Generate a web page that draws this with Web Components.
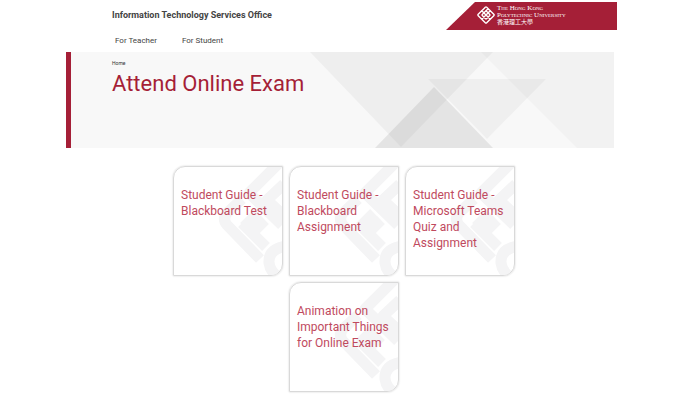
<!DOCTYPE html>
<html lang="en">
<head>
<meta charset="utf-8">
<title>Attend Online Exam</title>
<style>
	body {
		margin: 0;
		background: #fff;
		font-family: Roboto, "Liberation Sans", sans-serif;
	}
</style>
</head>
<body>
<exam-page></exam-page>

<template id="site-logo">
	<style>
		:host {
			display: block;
		}
		a {
			display: flex;
			align-items: flex-start;
			gap: 2px;
			box-sizing: border-box;
			width: 171px;
			height: 28px;
			padding: 3px 0 0 31px;
			background: #a51f37;
			clip-path: polygon(29px 0, 100% 0, 100% 100%, 0 100%);
			color: #fff;
			text-decoration: none;
		}
		svg {
			display: block;
			flex: none;
		}
		.name {
			font: 7px/7px "Liberation Serif", "Noto Sans CJK TC", serif;
			white-space: nowrap;
		}
		.name span {
			display: block;
		}
		.caps {
			font-variant: small-caps;
		}
		.zh {
			font-size: 6px;
		}
	</style>
	<a href="#">
		<svg width="18" height="20" viewBox="0 0 18 20" fill="none" stroke="#fff" stroke-width="1.4" aria-hidden="true">
			<g transform="rotate(45 9 10)">
				<path d="M3 7V5Q3 4 4 4H9V10H3V7M6 4V7H12M9 4H14Q15 4 15 5V10H9M12 7V13M15 10V15Q15 16 14 16H9V10M12 13H6M9 16H4Q3 16 3 15V10M6 13V7"/>
			</g>
		</svg>
		<span class="name">
			<span class="caps">The Hong Kong</span>
			<span class="caps">Polytechnic University</span>
			<span class="zh">香港理工大學</span>
		</span>
	</a>
</template>

<template id="site-header">
	<style>
		:host {
			display: block;
			padding: 2px 68px 0 112px;
			color: #444;
		}
		.top {
			display: flex;
			justify-content: space-between;
		}
		.office {
			padding-top: 7px;
			font-size: 9px;
			line-height: 12px;
			font-weight: 700;
		}
		nav {
			display: flex;
			gap: 25px;
			padding: 6px 3px 7px;
			font-size: 8px;
			line-height: 9px;
		}
		nav a {
			color: inherit;
			text-decoration: none;
		}
	</style>
	<div class="top">
		<div class="office"><slot></slot></div>
		<site-logo></site-logo>
	</div>
	<nav>
		<a href="#">For Teacher</a>
		<a href="#">For Student</a>
	</nav>
</template>

<template id="page-banner">
	<style>
		:host {
			display: grid;
			margin: 0 71px 0 66px;
			min-height: 96px;
			border-left: 5px solid #a51f37;
			box-sizing: border-box;
			background: #f8f8f8;
		}
		svg, .text {
			grid-area: 1 / 1;
		}
		svg {
			justify-self: end;
		}
		.text {
			padding: 8px 0 0 41px;
		}
		.crumb {
			display: block;
			color: #333;
			font-size: 5px;
			line-height: 6px;
			text-decoration: none;
		}
		h1 {
			margin: 5px 0 0;
			color: #a51f37;
			font-size: 22px;
			line-height: 26px;
			font-weight: 400;
		}
	</style>
	<svg width="304" height="96" viewBox="310 52 304 96" aria-hidden="true">
		<path d="M310 52H493L401 147Z" fill="#000" fill-opacity=".04"/>
		<path d="M481 52H614V148H577Z" fill="#000" fill-opacity=".025"/>
		<path d="M428 79H546L487 139Z" fill="#000" fill-opacity=".035"/>
		<path d="M375 148L434 87L493 148Z" fill="#000" fill-opacity=".08"/>
	</svg>
	<div class="text">
		<a class="crumb" href="#">Home</a>
		<h1><slot></slot></h1>
	</div>
</template>

<template id="guide-card">
	<style>
		:host {
			display: block;
			width: 110px;
		}
		a {
			display: grid;
			box-sizing: border-box;
			height: 110px;
			border: 1px solid #d9d9d9;
			border-radius: 12px 0 12px 0;
			box-shadow: 0 0 2px #ccc;
			overflow: hidden;
			color: #bf4a5e;
			text-decoration: none;
		}
		svg, span {
			grid-area: 1 / 1;
		}
		svg {
			justify-self: end;
		}
		span {
			padding: 20px 0 0 7px;
			font-size: 12px;
			line-height: 16px;
			z-index: 1;
		}
	</style>
	<a href="#">
		<svg width="64" height="108" viewBox="0 0 64 108" fill="none" stroke="#f4f4f5" stroke-width="11" stroke-linejoin="round" aria-hidden="true">
			<path d="M62 -5L31 26L64 58M66 17L49 33L66 49"/>
			<path d="M24 32L9 46Q4 52 9 58L42 92"/>
			<path d="M26 60L40 46M24 56L48 80M34 66L47 53"/>
			<path d="M68 79Q50 82 51 96Q52 104 60 110"/>
		</svg>
		<span><slot></slot></span>
	</a>
</template>

<template id="exam-page">
	<style>
		:host {
			display: block;
		}
		main {
			display: flex;
			flex-wrap: wrap;
			justify-content: center;
			gap: 6px;
			max-width: 342px;
			margin: 18px auto 0;
			padding: 0 0 8px 3px;
		}
	</style>
	<site-header>Information Technology Services Office</site-header>
	<page-banner>Attend Online Exam</page-banner>
	<main>
		<guide-card>Student Guide - Blackboard Test</guide-card>
		<guide-card>Student Guide - Blackboard Assignment</guide-card>
		<guide-card>Student Guide - Microsoft Teams Quiz and Assignment</guide-card>
		<guide-card>Animation on Important Things for Online Exam</guide-card>
	</main>
</template>

<script>
class TemplateElement extends HTMLElement {
	constructor() {
		super();
		const shadow = this.attachShadow({mode: 'open'});
		const template = document.getElementById(this.localName);
		shadow.appendChild(template.content.cloneNode(true));
	}
}

customElements.define("site-logo", class extends TemplateElement {});
customElements.define("site-header", class extends TemplateElement {});
customElements.define("page-banner", class extends TemplateElement {});
customElements.define("guide-card", class extends TemplateElement {});
customElements.define("exam-page", class extends TemplateElement {});
</script>
</body>
</html>
